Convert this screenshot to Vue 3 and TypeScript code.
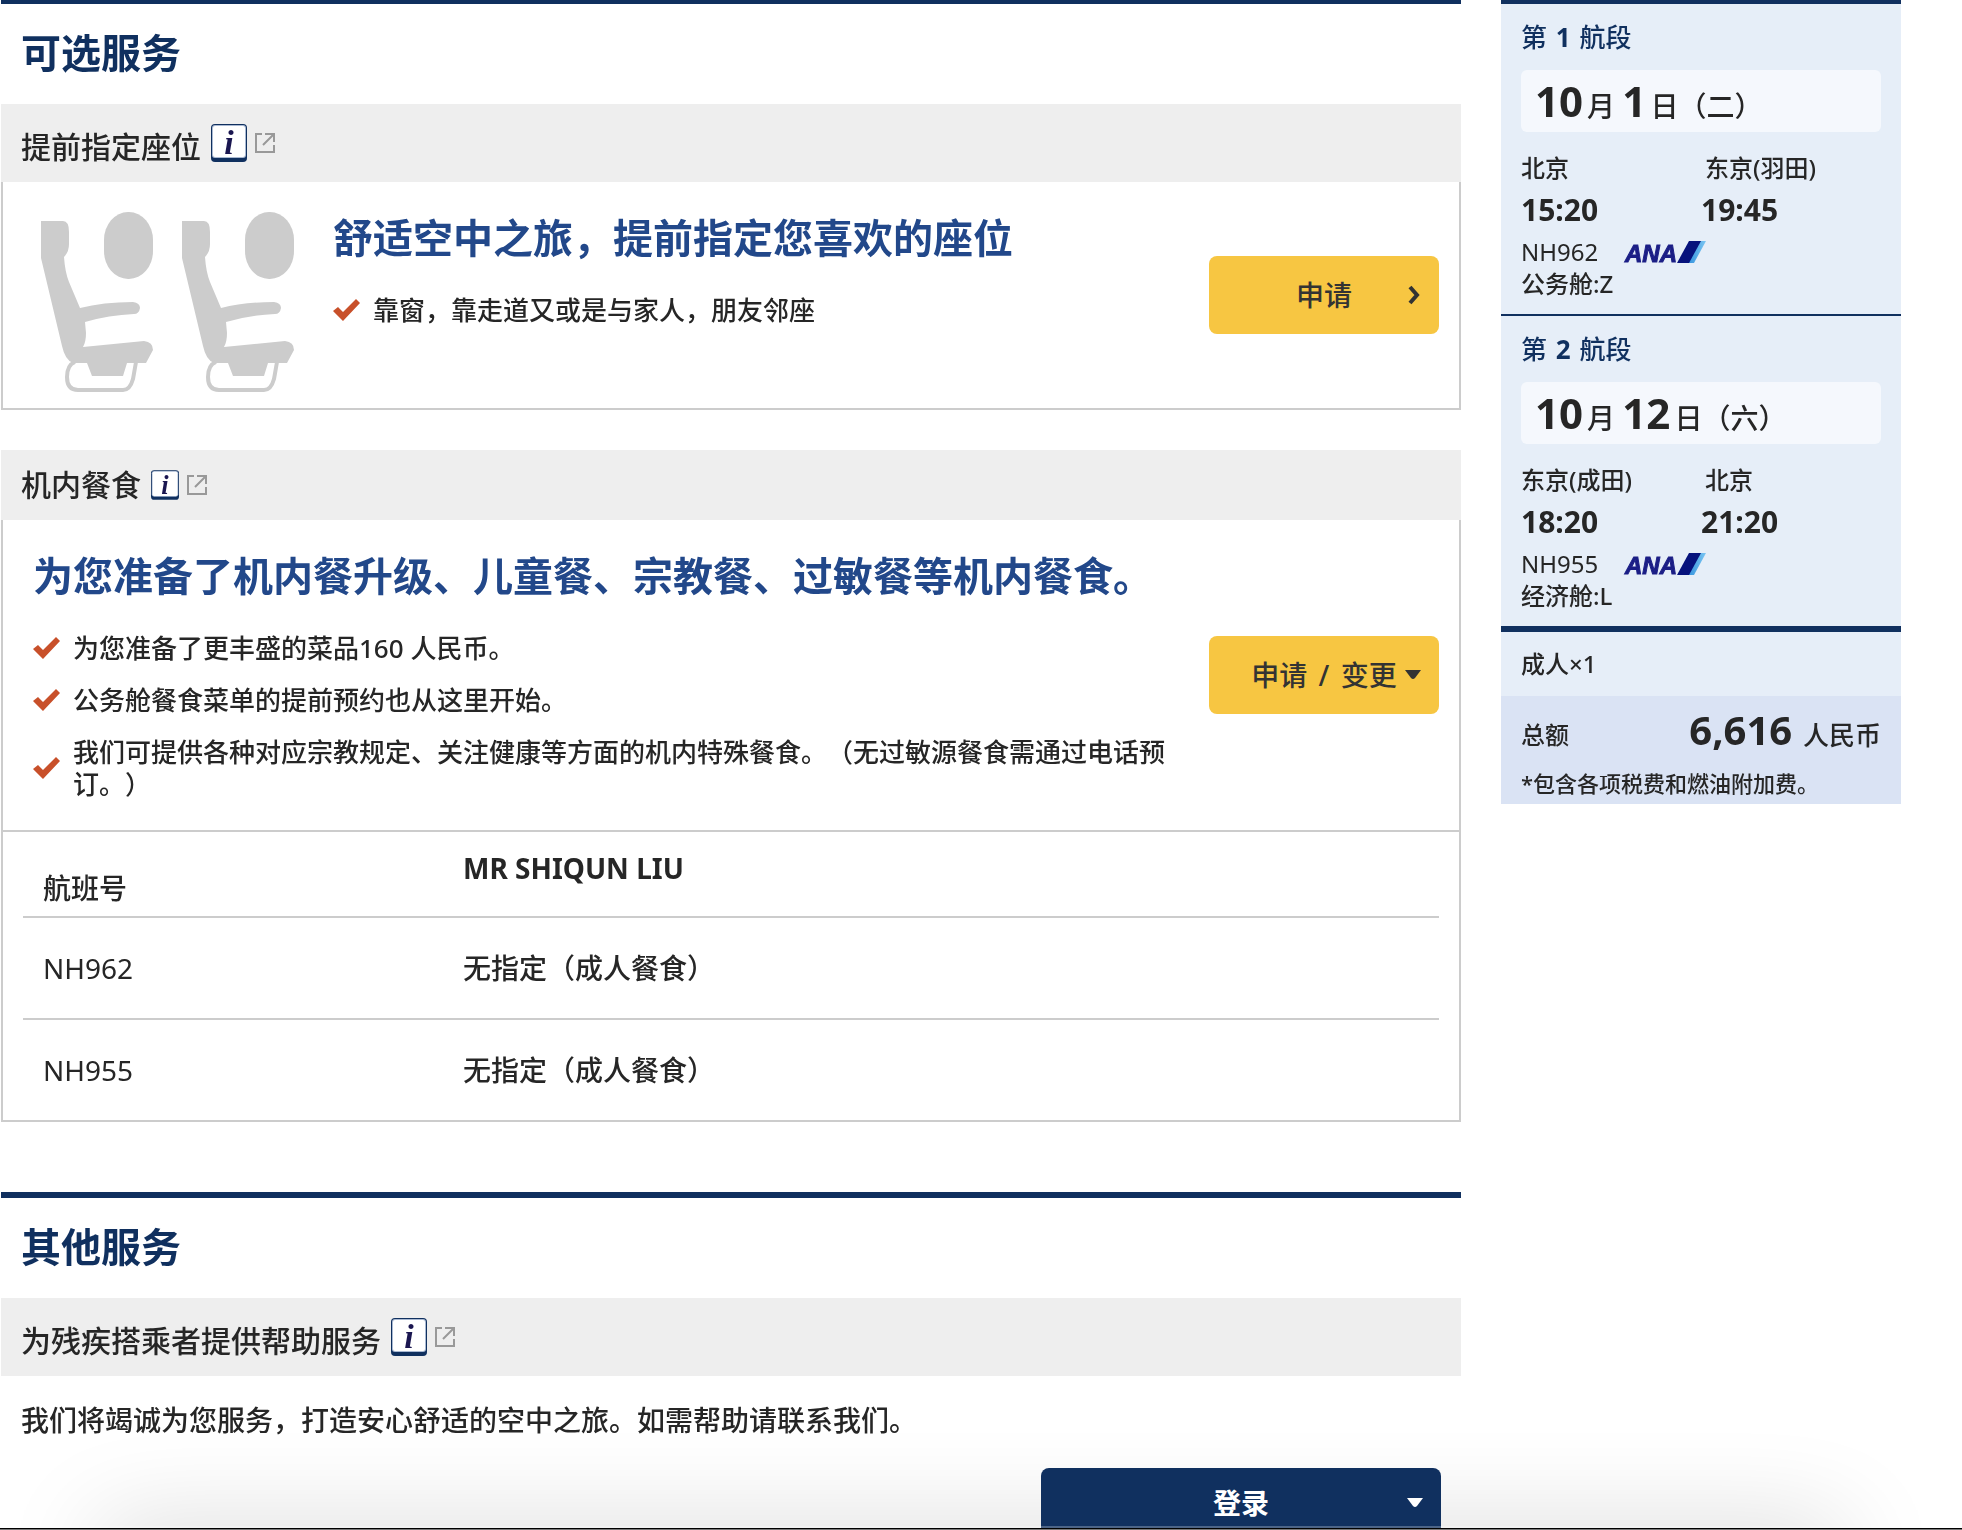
<script setup lang="ts">
interface Segment {
  no: number
  month: number
  day: number
  weekday: string
  from: string
  to: string
  depart: string
  arrive: string
  flight: string
  cabin: string
}

const segments: Segment[] = [
  { no: 1, month: 10, day: 1, weekday: '二', from: '北京', to: '东京(羽田)', depart: '15:20', arrive: '19:45', flight: 'NH962', cabin: '公务舱:Z' },
  { no: 2, month: 10, day: 12, weekday: '六', from: '东京(成田)', to: '北京', depart: '18:20', arrive: '21:20', flight: 'NH955', cabin: '经济舱:L' },
]

const seatPoints: string[] = ['靠窗，靠走道又或是与家人，朋友邻座']

const mealPoints: string[] = [
  '为您准备了更丰盛的菜品160 人民币。',
  '公务舱餐食菜单的提前预约也从这里开始。',
  '我们可提供各种对应宗教规定、关注健康等方面的机内特殊餐食。（无过敏源餐食需通过电话预订。）',
]

const meals: { flight: string; meal: string }[] = [
  { flight: 'NH962', meal: '无指定（成人餐食）' },
  { flight: 'NH955', meal: '无指定（成人餐食）' },
]
</script>

<template>
  <div class="page">
    <svg class="defs" width="0" height="0">
      <defs>
        <symbol id="info" viewBox="0 0 36 38">
          <rect width="36" height="38" rx="4" fill="#10305f" />
          <rect x="1" y="1" width="34" height="33" rx="3" fill="#a9b9d2" />
          <rect x="2" y="2" width="32" height="31" rx="2" fill="#fff" />
          <text x="18" y="30" text-anchor="middle" class="info-letter">i</text>
        </symbol>
        <symbol id="ext" viewBox="0 0 20 22">
          <path d="M7 2H1V20H19V13M10 2H19V10M19 2L8 13" fill="none" stroke="#999" stroke-width="2" />
        </symbol>
        <symbol id="check" viewBox="0 0 28 22">
          <path d="M0 12L5 8L10 13L23 0L27 4L10 22Z" fill="#c8502a" />
        </symbol>
        <symbol id="seat" viewBox="0 0 113 180">
          <rect x="63" y="0" width="49" height="67" rx="24" ry="28" />
          <path d="M0 9H22Q28 9 28 20V32Q28 40 23 45Q24 60 28 70L39 96Q62 90 92 90Q99 91 99 96Q98 102 93 102Q68 103 44 110L45 121Q45 130 42 135L103 129Q112 130 112 138L105 151H86L82 164H51L46 151H32Q24 148 21 134L0 46Z" />
          <path d="M34 150Q26 153 26 165Q26 178 37 178H82Q89 178 92 167L95 150" fill="none" stroke="#ccc" stroke-width="4" />
        </symbol>
        <linearGradient id="tail" x1="0" x2="1" y1="0" y2="0">
          <stop offset="0" stop-color="#2f8fdc" />
          <stop offset="1" stop-color="#7cc6f2" />
        </linearGradient>
      </defs>
    </svg>

    <main class="main">
      <section>
        <h2 class="section-title">可选服务</h2>

        <article class="card">
          <header class="card-head">
            <h3>提前指定座位</h3>
            <a href="#seat-info" class="info-link">
              <svg class="info" width="36" height="38"><use href="#info" /></svg>
              <svg width="20" height="22"><use href="#ext" /></svg>
            </a>
          </header>
          <div class="card-body seat-body">
            <div class="seats">
              <svg width="113" height="180"><use href="#seat" /></svg>
              <svg width="113" height="180"><use href="#seat" /></svg>
            </div>
            <div class="copy">
              <h4>舒适空中之旅，提前指定您喜欢的座位</h4>
              <ul>
                <li v-for="p in seatPoints" :key="p">
                  <svg width="28" height="22"><use href="#check" /></svg>
                  <span>{{ p }}</span>
                </li>
              </ul>
            </div>
            <button type="button" class="btn seat-btn">
              申请
              <svg class="mark" width="14" height="20" viewBox="0 0 14 20">
                <path d="M3 2L10 10L3 18" fill="none" stroke="#333" stroke-width="4" />
              </svg>
            </button>
          </div>
        </article>

        <article class="card">
          <header class="card-head">
            <h3>机内餐食</h3>
            <a href="#meal-info" class="info-link">
              <svg class="info" width="28" height="30"><use href="#info" /></svg>
              <svg width="20" height="22"><use href="#ext" /></svg>
            </a>
          </header>
          <div class="card-body">
            <div class="meal-body">
              <div class="copy">
                <h4>为您准备了机内餐升级、儿童餐、宗教餐、过敏餐等机内餐食。</h4>
                <ul>
                  <li v-for="p in mealPoints" :key="p">
                    <svg width="28" height="22"><use href="#check" /></svg>
                    <span>{{ p }}</span>
                  </li>
                </ul>
              </div>
              <button type="button" class="btn meal-btn">
                申请 <span class="slash">/</span> 变更
                <svg class="mark" width="16" height="10" viewBox="0 0 16 10">
                  <path d="M0 0H16L10 8Q8 10 6 8Z" fill="#333" />
                </svg>
              </button>
            </div>
            <div class="meal-table">
              <table>
                <thead>
                  <tr>
                    <th class="flight-col" scope="col">航班号</th>
                    <th class="name-col" scope="col">MR SHIQUN LIU</th>
                  </tr>
                </thead>
                <tbody>
                  <tr v-for="m in meals" :key="m.flight">
                    <td>{{ m.flight }}</td>
                    <td>{{ m.meal }}</td>
                  </tr>
                </tbody>
              </table>
            </div>
          </div>
        </article>
      </section>

      <section class="other">
        <h2 class="section-title">其他服务</h2>
        <header class="card-head">
          <h3>为残疾搭乘者提供帮助服务</h3>
          <a href="#assist-info" class="info-link">
            <svg class="info" width="36" height="38"><use href="#info" /></svg>
            <svg width="20" height="22"><use href="#ext" /></svg>
          </a>
        </header>
        <p class="assist">我们将竭诚为您服务，打造安心舒适的空中之旅。如需帮助请联系我们。</p>
        <button type="button" class="btn login">
          登录
          <svg class="mark" width="16" height="10" viewBox="0 0 16 10">
            <path d="M0 0H16L10 8Q8 10 6 8Z" fill="#fff" />
          </svg>
        </button>
      </section>
    </main>

    <aside class="side">
      <section v-for="s in segments" :key="s.no" class="segment">
        <h3>第 <b>{{ s.no }}</b> 航段</h3>
        <p class="date"><b>{{ s.month }}</b>月 <b>{{ s.day }}</b>日（{{ s.weekday }}）</p>
        <div class="pair cities"><span>{{ s.from }}</span><span>{{ s.to }}</span></div>
        <div class="pair times"><span>{{ s.depart }}</span><span>{{ s.arrive }}</span></div>
        <div class="flight">
          <span>{{ s.flight }}</span>
          <svg class="logo" width="82" height="22" viewBox="0 0 82 22">
            <path d="M75 0H82L70 22H63Z" fill="url(#tail)" />
            <path d="M65 0H77L65 22H53Z" fill="#06127c" />
            <text x="1" y="21" class="ana">ANA</text>
          </svg>
        </div>
        <p class="cabin">{{ s.cabin }}</p>
      </section>
      <p class="pax">成人×1</p>
      <div class="total">
        <div class="total-row">
          <span>总额</span>
          <span class="amount"><b>6,616</b> 人民币</span>
        </div>
        <p class="note">*包含各项税费和燃油附加费。</p>
      </div>
    </aside>

    <div class="dock-shadow"></div>
    <div class="dock"></div>
  </div>
</template>

<style>
body {
  margin: 0;
  background: #fff;
}
</style>

<style scoped>
.page {
  position: relative;
  z-index: 0;
  display: grid;
  grid-template-columns: minmax(0, 1fr) 400px;
  column-gap: 40px;
  align-items: start;
  box-sizing: border-box;
  height: 100vh;
  overflow: hidden;
  padding: 0 61px 0 1px;
  font-family: "Noto Sans", "Noto Sans CJK SC", sans-serif;
  font-size: 24px;
  line-height: 32px;
  font-weight: 400;
  color: #262626;
  text-spacing-trim: space-all;
}

h2,
h3,
h4,
p,
ul {
  margin: 0;
  padding: 0;
  font-weight: 500;
}

svg {
  display: block;
  flex: none;
}

.defs {
  position: absolute;
}

.info-letter {
  font: italic bold 34px "Liberation Serif", serif;
  fill: #1a1650;
}

.section-title {
  border-top: 4px solid #10305f;
  padding-left: 20px;
  font-size: 40px;
  line-height: 98px;
  padding-bottom: 2px;
  font-weight: 700;
  color: #10305f;
}

.other {
  margin-top: 70px;
}

.other .section-title {
  border-top-width: 6px;
}

.card + .card {
  margin-top: 40px;
}

.card-head {
  display: flex;
  align-items: flex-end;
  gap: 10px;
  padding: 20px;
  background: #eee;
}

.card-head h3 {
  font-size: 30px;
  line-height: 30px;
}

.info-link {
  display: flex;
  align-items: center;
  gap: 8px;
}

.card-body {
  border: 2px solid #ccc;
  border-top: 0;
}

.seat-body {
  display: flex;
  padding: 30px 20px 16px 38px;
}

.seats {
  display: flex;
  gap: 28px;
  margin-right: 38px;
  fill: #ccc;
}

.copy {
  flex: 1;
  min-width: 0;
}

.seat-body .copy {
  padding-top: 2px;
}

.copy h4 {
  font-size: 40px;
  line-height: 48px;
  font-weight: 700;
  color: #22488a;
}

.copy ul {
  display: flex;
  flex-direction: column;
  gap: 20px;
  margin-top: 32px;
  list-style: none;
}

.copy li {
  display: flex;
  align-items: center;
  gap: 12px;
  font-size: 26px;
}

.btn {
  position: relative;
  box-sizing: border-box;
  width: 230px;
  height: 78px;
  flex: none;
  border: 0;
  border-radius: 8px;
  padding: 0;
  background: #f7c642;
  color: #333;
  font: inherit;
  font-size: 28px;
  font-weight: 500;
  cursor: pointer;
}

.slash {
  margin: 0 4px;
}

.mark {
  position: absolute;
  right: 18px;
  top: 50%;
  transform: translateY(-50%);
}

.seat-btn {
  margin-top: 44px;
}

.meal-body {
  display: flex;
  gap: 20px;
  padding: 32px 20px 30px 30px;
}

.meal-btn {
  margin-top: 84px;
}

.meal-table {
  border-top: 2px solid #ccc;
  padding: 0 20px;
}

table {
  width: 100%;
  border-collapse: separate;
  border-spacing: 0;
  table-layout: fixed;
  font-size: 28px;
  line-height: 40px;
}

th,
td {
  box-sizing: border-box;
  height: 102px;
  padding: 0 20px;
  border-bottom: 2px solid #ccc;
  text-align: left;
  font-weight: 400;
}

th {
  height: 86px;
}

.flight-col {
  width: 420px;
  padding-bottom: 8px;
  vertical-align: bottom;
  font-weight: 500;
}

.name-col {
  padding-top: 16px;
  vertical-align: top;
  font-weight: 700;
}

td:last-child {
  font-weight: 500;
}

tr:last-child td {
  height: 100px;
  border-bottom: 0;
}

.assist {
  padding: 22px 20px 26px;
  font-size: 28px;
  line-height: 44px;
}

.login {
  display: block;
  width: 400px;
  height: 70px;
  margin: 0 20px 0 auto;
  background: #10305f;
  color: #fff;
  font-weight: 700;
}

.side {
  border-top: 4px solid #10305f;
  background: #e6eef8;
}

.segment {
  padding: 16px 20px 14px;
}

.segment + .segment {
  border-top: 2px solid #10305f;
}

.segment h3 {
  font-size: 26px;
  line-height: 34px;
  color: #10305f;
}

.segment h3 b {
  margin: 0 2px;
}

.date {
  margin: 16px 0 20px;
  padding: 10px 0 0 14px;
  border-radius: 6px;
  background: #f5f8fd;
  font-size: 28px;
  line-height: 52px;
}

.date b {
  margin-right: 4px;
  font-size: 42px;
  line-height: 42px;
}

.pair {
  display: grid;
  grid-template-columns: 1fr 1fr;
}

.cities {
  font-weight: 500;
}

.cities span + span {
  padding-left: 4px;
}

.times {
  margin: 8px 0;
  font-size: 30px;
  line-height: 36px;
  font-weight: 700;
}

.flight {
  display: flex;
  align-items: center;
  gap: 26px;
}

.logo {
  overflow: visible;
}

.ana {
  font: italic bold 24px "Liberation Sans", sans-serif;
  fill: #1b1e86;
  stroke: #1b1e86;
}

.pax {
  border-top: 6px solid #10305f;
  padding: 16px 20px;
}

.total {
  padding: 14px 20px 4px;
  background: #dae3f4;
}

.total-row {
  display: flex;
  align-items: center;
  justify-content: space-between;
  line-height: 50px;
  font-weight: 500;
}

.amount {
  font-size: 26px;
}

.amount b {
  margin-right: 4px;
  font-size: 40px;
  line-height: 40px;
}

.note {
  padding-top: 6px;
  font-size: 22px;
  line-height: 34px;
}

.dock {
  position: fixed;
  inset: auto 0 0;
  height: 1px;
  border-top: 1px solid #000;
  background: #777;
  box-shadow: 0 -2px 0 rgba(255, 255, 255, 0.25);
}

.dock-shadow {
  position: fixed;
  z-index: -1;
  right: 140px;
  bottom: -40px;
  left: 120px;
  height: 20px;
  box-shadow: 0 0 100px 20px rgba(0, 0, 0, 0.18);
}
</style>
